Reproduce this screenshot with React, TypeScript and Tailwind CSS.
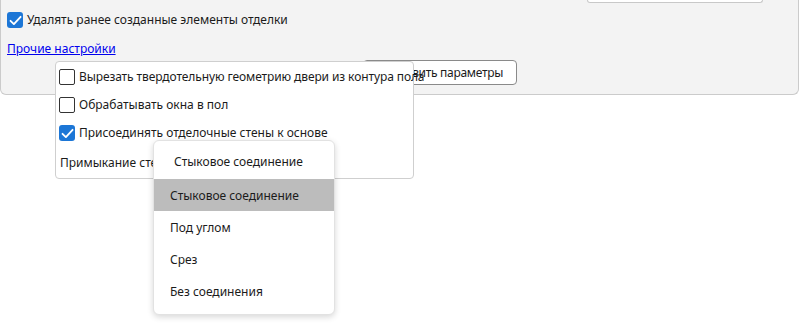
import React from 'react';

function Check({ checked }: { checked?: boolean }) {
  if (checked) {
    return (
      <span className="flex h-4 w-4 shrink-0 items-center justify-center rounded-[3px] bg-[#1c76d6]">
        <svg width="13" height="13" viewBox="0 0 12 12" fill="none">
          <path d="M1.4 6.3 L4.5 9.3 L10.7 2.6" stroke="#ffffff" strokeWidth="1.7" strokeLinecap="round" strokeLinejoin="round" />
        </svg>
      </span>
    );
  }
  return <span className="h-4 w-4 shrink-0 rounded-[2px] border border-[#333333] bg-white" />;
}

function CheckRow({ label, checked, tight }: { label: string; checked?: boolean; tight?: boolean }) {
  return (
    <div className="flex h-4 items-center gap-[4px]">
      <Check checked={checked} />
      <span className={`whitespace-nowrap ${tight ? 'tracking-[-0.1px]' : ''}`}>{label}</span>
    </div>
  );
}

const joints = ['Стыковое соединение', 'Под углом', 'Срез', 'Без соединения'];

export default function App() {
  return (
    <div className="relative h-[323px] w-[800px] overflow-hidden bg-white text-[12px] text-[#1b1b1b] [font-family:'Noto_Sans',sans-serif]">
      {/* main settings panel */}
      <div className="mr-[1px] h-[95px] rounded-b-[6px] border border-t-0 border-[#cbcbcb] bg-[#f3f3f3]">
        <div className="ml-[586px] h-[3px] w-[176px] rounded-b-[4px] border border-t-0 border-[#c8c8c8] bg-white" />
        <div className="ml-[6px] mt-[9px]">
          <CheckRow checked label="Удалять ранее созданные элементы отделки" />
        </div>
        <a href="#" className="ml-[6px] mt-[13px] inline-block leading-[16px] text-[#0000ee] underline">
          Прочие настройки
        </a>
        <div className="mt-[2px] flex justify-end pr-[281px]">
          <button className="h-[25px] rounded-[4px] border border-[#8a8a8a] bg-white pl-[11px] pr-[13px] leading-none tracking-[-0.3px]">
            Установить параметры
          </button>
        </div>
      </div>

      {/* other settings flyout */}
      <div className="absolute left-[55px] top-[61px] flex h-[118px] w-[359px] flex-col gap-[12px] rounded-[4px] border border-[#cfcfcf] bg-white pl-[3px] pt-[7px]">
        <CheckRow tight label="Вырезать твердотельную геометрию двери из контура пола" />
        <CheckRow label="Обрабатывать окна в пол" />
        <CheckRow checked label="Присоединять отделочные стены к основе" />
        <div className="mt-[2px] whitespace-nowrap pl-[1px] leading-[16px]">Примыкание стен</div>
      </div>

      {/* joint type dropdown */}
      <div className="absolute left-[153px] top-[140px] flex h-[175px] w-[182px] flex-col rounded-[6px] border border-[#e2e2e2] bg-white shadow-[0_2px_6px_rgba(0,0,0,0.16)]">
        <div className="flex h-[38px] items-center pl-[20px] pt-[4px]">Стыковое соединение</div>
        {joints.map((j, i) => (
          <div
            key={j}
            className={`flex h-[32px] items-center pl-[16px] pt-[2px] ${i === 0 ? 'bg-[#bcbcbc]' : ''}`}
          >
            {j}
          </div>
        ))}
      </div>
    </div>
  );
}
